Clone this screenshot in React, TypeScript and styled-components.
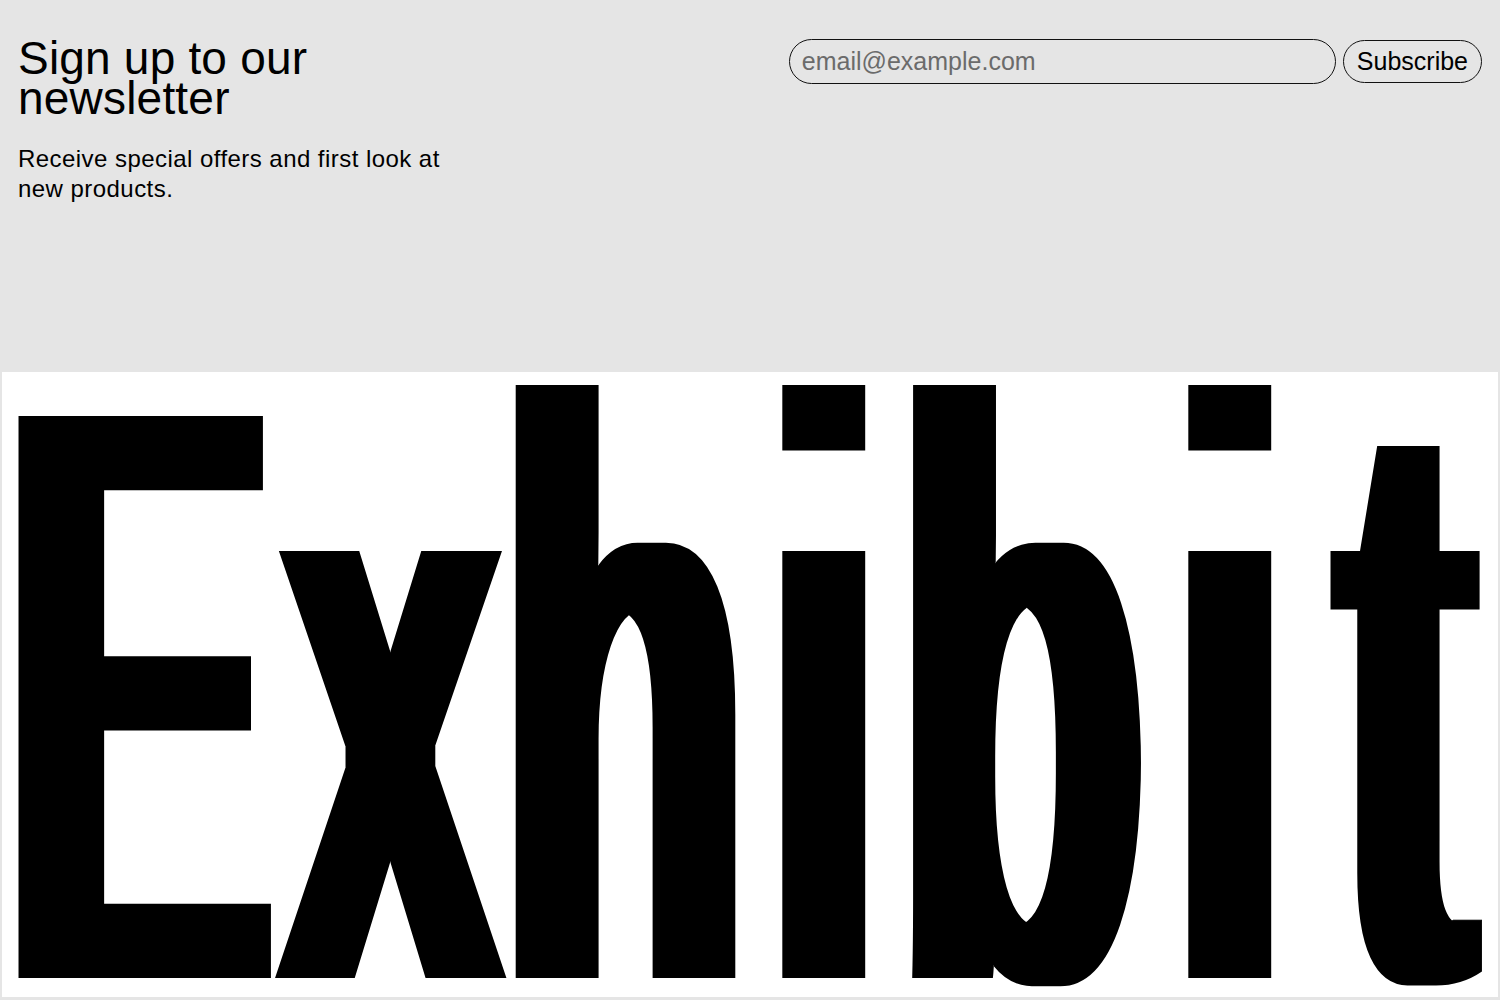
import React from "react";
import styled, { createGlobalStyle } from "styled-components";

const GlobalStyle = createGlobalStyle`
  html, body {
    margin: 0;
    padding: 0;
    background: #e5e5e5;
    font-family: "Liberation Sans", Arial, sans-serif;
    color: #000;
  }
  * {
    box-sizing: border-box;
  }
`;

// glyph origins for the wordmark, in the text's own (horizontally squeezed) units
const LETTER_X = [12.2, 591.4, 1061.3, 1625.2, 1901.8, 2483.9, 2833.4];

const App = () => {
  return (
    <Page>
      <GlobalStyle />
      <Newsletter>
        <Intro>
          <Heading>Sign up to our newsletter</Heading>
          <Lead>Receive special offers and first look at new products.</Lead>
        </Intro>
        <Form onSubmit={e => e.preventDefault()}>
          <EmailInput type="email" placeholder="email@example.com" />
          <SubscribeButton type="submit">Subscribe</SubscribeButton>
        </Form>
      </Newsletter>
      <Brand>
        <Wordmark viewBox="2 372 1496 625" preserveAspectRatio="none">
          <defs>
            {/* thicken stems, thin the arms: a condensed grotesk look */}
            <filter id="condense" x="-10%" y="-10%" width="120%" height="120%">
              <feMorphology in="SourceGraphic" operator="erode" radius="0 10" result="thin" />
              <feMorphology in="thin" operator="dilate" radius="14 0" />
            </filter>
          </defs>
          <g filter="url(#condense)">
            <text
              x={LETTER_X.join(" ")}
              y={988}
              transform="scale(0.4728 1)"
              fontFamily="'Liberation Sans', Arial, sans-serif"
              fontWeight={700}
              fontSize={846}
              fill="#000"
            >
              Exhibit
            </text>
          </g>
        </Wordmark>
      </Brand>
    </Page>
  );
};

const Page = styled.div`
  width: 100%;
  min-height: 1000px;
  background: #e5e5e5;
`;

const Newsletter = styled.section`
  display: flex;
  justify-content: space-between;
  align-items: flex-start;
  height: 372px;
  padding: 38px 18px 0;
`;

const Intro = styled.div`
  width: 450px;
`;

const Heading = styled.h2`
  margin: 0;
  font-size: 46px;
  line-height: 40px;
  font-weight: 400;
  letter-spacing: 0.2px;
`;

const Lead = styled.p`
  margin: 26px 0 0;
  font-size: 24px;
  line-height: 30px;
  letter-spacing: 0.45px;
`;

const Form = styled.form`
  display: flex;
  align-items: center;
  gap: 7px;
  margin-top: 1px;
`;

const EmailInput = styled.input`
  width: 547px;
  height: 45px;
  padding: 0 12px;
  border: 1px solid #111;
  border-radius: 23px;
  background: transparent;
  font-family: "Liberation Sans", Arial, sans-serif;
  font-size: 25px;
  color: #000;
  outline: none;
  &::placeholder {
    color: #6b6b6b;
  }
`;

const SubscribeButton = styled.button`
  height: 43px;
  padding: 0 13px;
  border: 1px solid #111;
  border-radius: 22px;
  background: transparent;
  font-family: "Liberation Sans", Arial, sans-serif;
  font-size: 25px;
  color: #000;
  cursor: pointer;
`;

const Brand = styled.div`
  margin: 0 2px;
  height: 625px;
  background: #fff;
  overflow: hidden;
`;

const Wordmark = styled.svg`
  display: block;
  width: 100%;
  height: 100%;
`;

export default App;
